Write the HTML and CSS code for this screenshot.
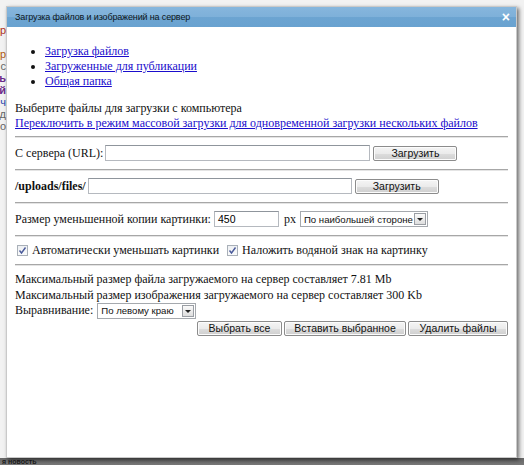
FILE: index.html
```html
<!DOCTYPE html>
<html lang="ru">
<head>
<meta charset="utf-8">
<title>Загрузка файлов</title>
<link rel="stylesheet" href="styles.css">
</head>
<body>
<div class="page">
  <div class="page-left">
    <span class="frag c-red">р</span>
    <span class="frag c-org">р</span>
    <span class="frag c-gry">с</span>
    <span class="frag c-pur">ь</span>
    <span class="frag c-pur">й</span>
    <span class="frag c-blu">ч</span>
    <span class="frag c-gry">д</span>
    <span class="frag c-gry">о</span>
  </div>
  <div class="page-bottom">я новость</div>
</div>

<div class="dialog">
  <div class="titlebar">
    <span class="title">Загрузка файлов и изображений на сервер</span>
    <span class="close">×</span>
  </div>
  <div class="content">
    <ul class="tabs">
      <li><a href="#">Загрузка файлов</a></li>
      <li><a href="#">Загруженные для публикации</a></li>
      <li><a href="#">Общая папка</a></li>
    </ul>
    <div class="line">Выберите файлы для загрузки с компьютера</div>
    <div class="line"><a href="#">Переключить в режим массовой загрузки для одновременной загрузки нескольких файлов</a></div>
    <hr class="sep sep-first">
    <div class="row">
      <span>С сервера (URL):</span>
      <span class="input url"></span>
      <span class="btn btn-load">Загрузить</span>
    </div>
    <hr class="sep">
    <div class="row">
      <b>/uploads/files/</b>
      <span class="input folder"></span>
      <span class="btn btn-load">Загрузить</span>
    </div>
    <hr class="sep">
    <div class="row">
      <span>Размер уменьшенной копии картинки:</span>
      <span class="input size">450</span>
      <span class="px">px</span>
      <span class="select sel-side">По наибольшей стороне<span class="arrow"></span></span>
    </div>
    <hr class="sep">
    <div class="row checks">
      <span class="check"><svg viewBox="0 0 11 11" width="11" height="11"><path d="M2.5 5.5 L4.5 8 L8.5 2.5" fill="none" stroke="#4a5a9a" stroke-width="1.4"/></svg></span>
      <span class="check-label">Автоматически уменьшать картинки</span>
      <span class="check"><svg viewBox="0 0 11 11" width="11" height="11"><path d="M2.5 5.5 L4.5 8 L8.5 2.5" fill="none" stroke="#4a5a9a" stroke-width="1.4"/></svg></span>
      <span class="check-label">Наложить водяной знак на картинку</span>
    </div>
    <hr class="sep sep-last">
    <div class="info">Максимальный размер файла загружаемого на сервер составляет 7.81 Mb</div>
    <div class="info">Максимальный размер изображения загружаемого на сервер составляет 300 Kb</div>
    <div class="row align">
      <span>Выравнивание:</span>
      <span class="select sel-align">По левому краю<span class="arrow"></span></span>
    </div>
    <div class="actions">
      <span class="btn btn-all">Выбрать все</span>
      <span class="btn btn-ins">Вставить выбранное</span>
      <span class="btn btn-del">Удалить файлы</span>
    </div>
  </div>
</div>
</body>
</html>
```

FILE: styles.css
```css
html, body {
  margin: 0;
  padding: 0;
}
body {
  width: 524px;
  height: 465px;
  background: #f2f2f2;
  position: relative;
  overflow: hidden;
  font-family: "Liberation Serif", "Times New Roman", serif;
}

/* page behind the dialog */
.page {
  height: 465px;
  display: flex;
  flex-direction: column;
  justify-content: space-between;
}
.page-left {
  margin-top: 24px;
  width: 6px;
  display: flex;
  flex-direction: column;
  align-items: flex-end;
  overflow: hidden;
  font-family: "Liberation Sans", Arial, sans-serif;
  font-size: 11px;
  line-height: 12px;
  border-right: 1px solid #c8c8c8;
}
.frag { display: block; }
.c-red { color: #b03020; }
.c-org { color: #b05a10; margin-top: 12px; }
.c-gry { color: #666; }
.c-pur { color: #6a2a8a; font-weight: bold; }
.c-blu { color: #2a4ab0; }
.page-bottom {
  height: 7px;
  background: linear-gradient(#686868, #787878);
  font-family: "Liberation Sans", Arial, sans-serif;
  font-size: 7px;
  line-height: 7px;
  font-weight: bold;
  color: #1c1c1c;
  padding-left: 2px;
}

/* dialog */
.dialog {
  position: absolute;
  left: 6px;
  top: 6px;
  width: 511px;
  height: 452px;
  background: #fff;
  border: 1px solid #c9c9c9;
  box-sizing: border-box;
  box-shadow: 2px 2px 4px rgba(0, 0, 0, 0.55);
}
.titlebar {
  height: 20px;
  background: linear-gradient(#86b6dd 0%, #7eb0d9 50%, #6ca4d1 51%, #69a2d0 100%);
  display: flex;
  align-items: center;
  justify-content: space-between;
  padding: 0 6px 0 8px;
  font-family: "Liberation Sans", Arial, sans-serif;
}
.title {
  font-size: 9px;
  letter-spacing: -0.15px;
  color: #0e1620;
}
.close {
  color: #fff;
  font-size: 14px;
  font-weight: bold;
  line-height: 14px;
}

.content {
  padding: 0 8px 0 8px;
  font-size: 12px;
  line-height: 15px;
  color: #111;
}
a { color: #1a0dcc; }

.tabs {
  margin: 17px 0 12px 0;
  padding: 0 0 0 30px;
}
.tabs li { line-height: 15px; }

.line { line-height: 15px; white-space: nowrap; }

.sep {
  margin: 6px 0 6px 0;
  border: 0;
  border-top: 1px solid #a7a7a7;
  border-bottom: 1px solid #e4e4e4;
  height: 0;
}
.sep-first { margin-top: 5px; }
.sep-last { margin-bottom: 5px; }

.row {
  display: flex;
  align-items: center;
  height: 18px;
  white-space: nowrap;
}
.row + .sep { margin-top: 7px; }
.checks + .sep { margin-top: 6px; }

.input {
  display: inline-block;
  box-sizing: border-box;
  height: 16px;
  border: 1px solid #b5b9bf;
  border-top-color: #8f959c;
  background: #fff;
  font-family: "Liberation Sans", Arial, sans-serif;
  font-size: 10.5px;
  line-height: 14px;
  padding-left: 3px;
  color: #000;
}
.url { width: 265px; margin-left: 2px; }
.folder { width: 264px; margin-left: 2px; }
.size { width: 65px; margin-left: 3px; }
.px { margin-left: 5px; }

.btn {
  display: inline-flex;
  align-items: center;
  justify-content: center;
  box-sizing: border-box;
  height: 15px;
  border: 1px solid #8c8c8c;
  border-radius: 2px;
  background: linear-gradient(#f5f5f5 0%, #ebebeb 50%, #dddddd 51%, #cfcfcf 100%);
  font-family: "Liberation Sans", Arial, sans-serif;
  font-size: 10.5px;
  color: #111;
  white-space: nowrap;
  box-shadow: inset 0 0 0 1px #fcfcfc;
}
.btn-load { width: 84px; margin-left: 3px; }

.select {
  display: inline-flex;
  align-items: center;
  box-sizing: border-box;
  height: 16px;
  border: 1px solid #a5a9ae;
  background: #fff;
  font-family: "Liberation Sans", Arial, sans-serif;
  font-size: 9.6px;
  padding-left: 3px;
  color: #111;
  white-space: nowrap;
  overflow: hidden;
  position: relative;
}
.sel-side { width: 128px; margin-left: 4px; }
.sel-align { width: 99px; margin-left: 4px; }
.arrow {
  position: absolute;
  right: 1px;
  top: 1px;
  width: 12px;
  height: 12px;
  box-sizing: border-box;
  border: 1px solid #9a9ea4;
  background: linear-gradient(#fafafa, #dedede);
}
.arrow::after {
  content: "";
  position: absolute;
  left: 2px;
  top: 4px;
  border-left: 3px solid transparent;
  border-right: 3px solid transparent;
  border-top: 3px solid #222;
}

.checks { height: 15px; }
.check {
  display: inline-block;
  box-sizing: border-box;
  width: 11px;
  height: 11px;
  border: 1px solid #a9b0b8;
  background: linear-gradient(#eef0f3, #fafbfc);
  margin-left: 2px;
  position: relative;
}
.check svg { position: absolute; left: -1px; top: -1px; }
.check-label { margin-left: 4px; margin-right: 6px; }

.info { line-height: 16px; white-space: nowrap; }

.align { height: 15px; }

.actions {
  display: flex;
  justify-content: flex-end;
  gap: 2px;
  margin-top: 3px;
}
.btn-all { width: 85px; }
.btn-ins { width: 122px; }
.btn-del { width: 100px; }
```
